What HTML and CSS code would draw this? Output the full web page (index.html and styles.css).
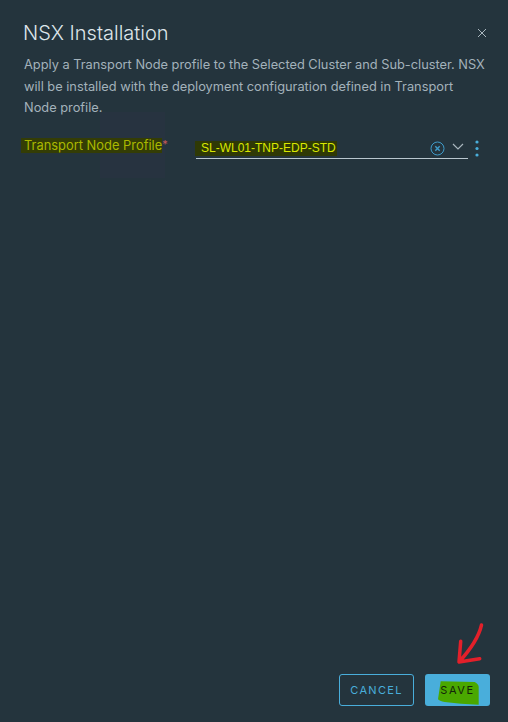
FILE: index.html
```html
<!DOCTYPE html>
<html lang="en">
<head>
    <meta charset="UTF-8">
    <meta name="viewport" content="width=device-width, initial-scale=1.0">
    <title>NSX Installation</title>
    <link rel="stylesheet" href="styles.css">
</head>
<body>
    <div class="modal">
        <!-- faint patch left over in the screenshot -->
        <div class="patch"></div>
        <header class="modal-header">
            <h1>NSX Installation</h1>
            <button class="close" aria-label="Close">
                <svg width="10" height="10" viewBox="0 0 10 10"><path d="M1 1l8 8M9 1l-8 8"/></svg>
            </button>
        </header>
        <p class="intro">Apply a Transport Node profile to the Selected Cluster and Sub-cluster. NSX will be installed with the deployment configuration defined in Transport Node profile.</p>
        <div class="form-row">
            <label class="field-label"><span class="hl">Transport Node Profile</span><span class="required">*</span></label>
            <div class="select">
                <span class="value">SL-WL01-TNP-EDP-STD</span>
                <svg class="clear" width="15" height="15" viewBox="0 0 15 15"><circle cx="7.5" cy="7.5" r="6.5"/><path d="M5.3 5.3l4.4 4.4M9.7 5.3l-4.4 4.4"/></svg>
                <svg class="caret" width="12" height="7" viewBox="0 0 12 7"><path d="M1 1l5 5 5-5"/></svg>
            </div>
            <svg class="more" width="4" height="17" viewBox="0 0 4 17"><circle cx="2" cy="2" r="1.6"/><circle cx="2" cy="8.5" r="1.6"/><circle cx="2" cy="15" r="1.6"/></svg>
        </div>
        <footer class="modal-footer">
            <button class="btn btn-outline">CANCEL</button>
            <button class="btn btn-primary">
                <svg class="scribble" width="65" height="32" viewBox="0 0 65 32"><path d="M15.7 7.3L49.7 8C52 9 53.7 11 53.7 13L53.7 30.7L36 29.7L19.7 28C16 27.5 14 26.5 13 25.3Z"/></svg>
                <span class="btn-text">SAVE</span>
            </button>
        </footer>

        <!-- red arrow drawn on top of the screenshot -->
        <svg class="arrow" width="34" height="44" viewBox="0 0 34 44"><path d="M25.5 3C23 14 14 28 3 40M4.7 19.3L3 40L23.7 36.7"/></svg>
    </div>
</body>
</html>
```

FILE: styles.css
```css
body {
    margin: 0;
    background-color: #24343d;
    font-family: Inter, "Open Sans", sans-serif;
}
.modal {
    position: relative;
    box-sizing: border-box;
    height: 722px;
    padding: 21px 18px 16px 24px;
    display: flex;
    flex-direction: column;
}
.patch {
    position: absolute;
    left: 100px;
    top: 112px;
    width: 65px;
    height: 66px;
    background-color: #273340;
}
.modal-header {
    position: relative;
    display: flex;
    justify-content: space-between;
    align-items: center;
}
.modal-header h1 {
    margin: 0 0 0 -1px;
    font-size: 20px;
    line-height: 24px;
    font-weight: 300;
    color: #dde5ea;
}
.close {
    padding: 0;
    margin-right: 3px;
    border: none;
    background: none;
    display: flex;
}
.close svg path {
    fill: none;
    stroke: #a9b6be;
    stroke-width: 1;
}
.intro {
    position: relative;
    margin: 9px 0 0;
    max-width: 463px;
    font-size: 12.8px;
    line-height: 21.5px;
    color: #a3b2bb;
}
.form-row {
    position: relative;
    display: flex;
    align-items: flex-start;
    margin-top: 16px;
}
.field-label {
    width: 172px;
    margin-top: 2px;
    font-size: 12.9px;
    line-height: 15px;
    color: #aab800;
}
.hl {
    margin-left: -3px;
    padding: 0 0 0 3px;
    background-color: #343d05;
}
.required {
    color: #c25a5a;
    font-size: 11px;
    vertical-align: 2px;
}
.select {
    width: 272px;
    height: 24px;
    box-sizing: border-box;
    display: flex;
    align-items: center;
    border-bottom: 1px solid #b9c7cf;
    padding: 4px 4px 0 0;
}
.value {
    margin: 0 auto 0 -1px;
    padding: 0 1px 0 6px;
    background-color: #2f3905;
    color: #d9e800;
    font-family: "Liberation Sans", Arial, sans-serif;
    font-size: 12px;
    line-height: 15px;
}
.clear {
    margin-right: 7px;
}
.clear circle, .clear path {
    fill: none;
    stroke: #3f9bc9;
    stroke-width: 1;
}
.clear path {
    stroke-width: 1.4;
}
.caret {
    margin-top: -3px;
}
.caret path {
    fill: none;
    stroke: #a9b6be;
    stroke-width: 1.2;
}
.more {
    margin: 5px 0 0 7px;
}
.more circle {
    fill: #49aedb;
}
.modal-footer {
    margin-top: auto;
    display: flex;
    justify-content: flex-end;
    gap: 11px;
}
.btn {
    height: 32px;
    box-sizing: border-box;
    border-radius: 3px;
    font-family: Inter, "Open Sans", sans-serif;
    font-size: 11px;
    font-weight: 400;
    letter-spacing: 1.3px;
}
.btn-outline {
    width: 75px;
    background: none;
    border: 1px solid #49aedb;
    color: #49aedb;
}
.btn-primary {
    position: relative;
    width: 65px;
    padding: 0;
    background-color: #49aedb;
    border: none;
    color: #14240a;
    letter-spacing: 1.6px;
}
.scribble {
    position: absolute;
    left: 0;
    top: 0;
}
.scribble path {
    fill: #4aa800;
}
.btn-text {
    position: relative;
}
.arrow {
    position: absolute;
    left: 456px;
    top: 622px;
}
.arrow path {
    fill: none;
    stroke: #e3202a;
    stroke-width: 3.5;
    stroke-linecap: round;
    stroke-linejoin: round;
}
```
